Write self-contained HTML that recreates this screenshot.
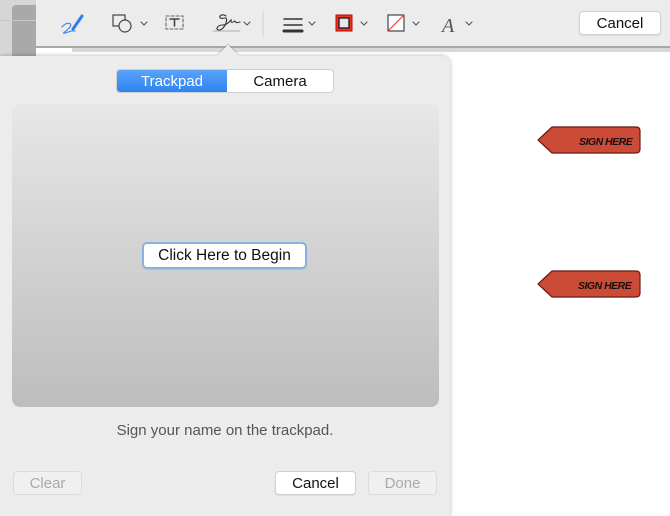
<!DOCTYPE html>
<html><head><meta charset="utf-8"><style>
*{margin:0;padding:0;box-sizing:border-box}
body{width:670px;height:504px;overflow:hidden;position:relative;background:#fff;font-family:"Liberation Sans",sans-serif}
.abs{position:absolute}
.btn{position:absolute;background:#fff;border:1px solid #d0d0d0;border-radius:4px;font-size:15px;text-align:center;color:#111;box-shadow:0 1px 1px rgba(0,0,0,.08)}
.dis{background:#f0f0f0;color:#aaa;border-color:#dcdcdc;box-shadow:none}
</style></head><body>
<div class="abs" style="left:0;top:0;width:36px;height:60px;background:#d6d6d6"></div>
<div class="abs" style="left:12px;top:5px;width:24px;height:55px;background:#a9a9a9;border-radius:4px 0 0 0"></div>
<div class="abs" style="left:0;top:20px;width:36px;height:1px;background:#c8c8c8"></div>
<div class="abs" style="left:36px;top:0;width:634px;height:48px;background:#ececec;border-bottom:2px solid #a8a8a8"></div>
<div class="abs" style="left:72px;top:48px;width:598px;height:4px;background:#d8d8d8"></div>
<svg class="abs" style="left:0;top:0" width="670" height="47">
<g fill="none" stroke-linecap="round">
<path d="M62 27 C66 22 73 22 70 27 C67 31 61 34 65 33 C69 32 73 30 75 31" stroke="#4a8fe8" stroke-width="1.3"/>
<path d="M73 29 L82 16" stroke="#2f7fe6" stroke-width="3"/>
<rect x="113" y="15" width="12" height="11" stroke="#444" stroke-width="1.2"/>
<circle cx="125" cy="26" r="6" stroke="#444" stroke-width="1.2" fill="#ececec"/>
<path d="M141 22 l3 3 l3 -3 M244 22 l3 3 l3 -3 M309 22 l3 3 l3 -3 M361 22 l3 3 l3 -3 M413 22 l3 3 l3 -3 M466 22 l3 3 l3 -3" stroke="#555" stroke-width="1.1"/>
<rect x="166" y="16" width="17" height="13" stroke="#666" stroke-width="1.1" stroke-dasharray="3 2"/>
<path d="M170 19 h9 M174.5 19 v7" stroke="#444" stroke-width="1.6"/>
<path d="M226 16 C220 12 216 20 225 18 C229 17 225 30 219 30 C215 30 217 25 223 25 C227 25 229 22 231 20 C231 24 233 22 235 21 C236 24 238 22 240 22" stroke="#333" stroke-width="1.1"/>
<path d="M213 31 h27" stroke="#999" stroke-width="0.8"/>
<path d="M263 12 v24" stroke="#cfcfcf" stroke-width="1"/>
<path d="M284 19 h18 M284 25 h18" stroke="#333" stroke-width="1.5"/>
<path d="M284 31 h18" stroke="#333" stroke-width="3"/>
<rect x="336" y="15" width="16" height="16" stroke="#c00" stroke-width="1" fill="#e32"/>
<rect x="339" y="18" width="10" height="10" stroke="#222" stroke-width="1.4" fill="#e8e8e8"/>
<rect x="388" y="15" width="16" height="16" stroke="#333" stroke-width="1.1" fill="#fff"/>
<path d="M388 31 L404 15" stroke="#d33" stroke-width="1"/>
</g>
<text x="442" y="32" font-family="Liberation Serif" font-style="italic" font-size="20" fill="#555">A</text>
</svg>
<div class="btn" style="left:579px;top:11px;width:82px;height:24px;line-height:23px">Cancel</div>
<svg class="abs" style="left:536px;top:125px" width="106" height="176">
<g fill="#cc4b37" stroke="#6a1a10" stroke-width="1.2">
<path d="M16 2 H100 Q104 2 104 6 V24 Q104 28 100 28 H16 L2 15 Z"/>
<path d="M16 146 H100 Q104 146 104 150 V168 Q104 172 100 172 H16 L2 159 Z"/>
</g>
<g font-family="Liberation Sans" font-weight="bold" font-style="italic" font-size="10.5" fill="#111" letter-spacing="-0.5">
<text x="43" y="20">SIGN HERE</text><text x="42" y="164">SIGN HERE</text></g>
</svg>
<div class="abs" style="left:0;top:56px;width:450px;height:460px;background:#ececec;border-radius:0 8px 0 0;box-shadow:0 0 4px rgba(0,0,0,.3)"></div>
<div class="abs" style="left:220px;top:48px;width:16px;height:16px;background:#ececec;transform:rotate(45deg);box-shadow:-1px -1px 1px rgba(0,0,0,.15)"></div>
<div class="abs" style="left:210px;top:56px;width:36px;height:10px;background:#ececec"></div>
<div class="abs" style="left:116px;top:69px;width:218px;height:24px;border:1px solid #cfcfcf;border-radius:4px;background:#fff;overflow:hidden;font-size:15px">
<div class="abs" style="left:0;top:0;width:110px;height:22px;background:linear-gradient(#5aa2f8,#2f84f0);color:#fff;text-align:center;line-height:23px">Trackpad</div>
<div class="abs" style="left:110px;top:0;width:106px;height:22px;color:#111;text-align:center;line-height:23px">Camera</div>
</div>
<div class="abs" style="left:12px;top:104px;width:427px;height:303px;border-radius:8px;background:linear-gradient(#e7e7e7,#bdbdbd)"></div>
<div class="btn" style="left:142px;top:242px;width:165px;height:27px;line-height:24px;border:2px solid #86b2e6;border-radius:5px;font-size:15.5px">Click Here to Begin</div>
<div class="abs" style="left:0;top:422px;width:450px;text-align:center;font-size:15px;color:#555">Sign your name on the trackpad.</div>
<div class="btn dis" style="left:13px;top:471px;width:69px;height:24px;line-height:23px">Clear</div>
<div class="btn" style="left:275px;top:471px;width:81px;height:24px;line-height:23px">Cancel</div>
<div class="btn dis" style="left:368px;top:471px;width:69px;height:24px;line-height:23px">Done</div>
</body></html>
